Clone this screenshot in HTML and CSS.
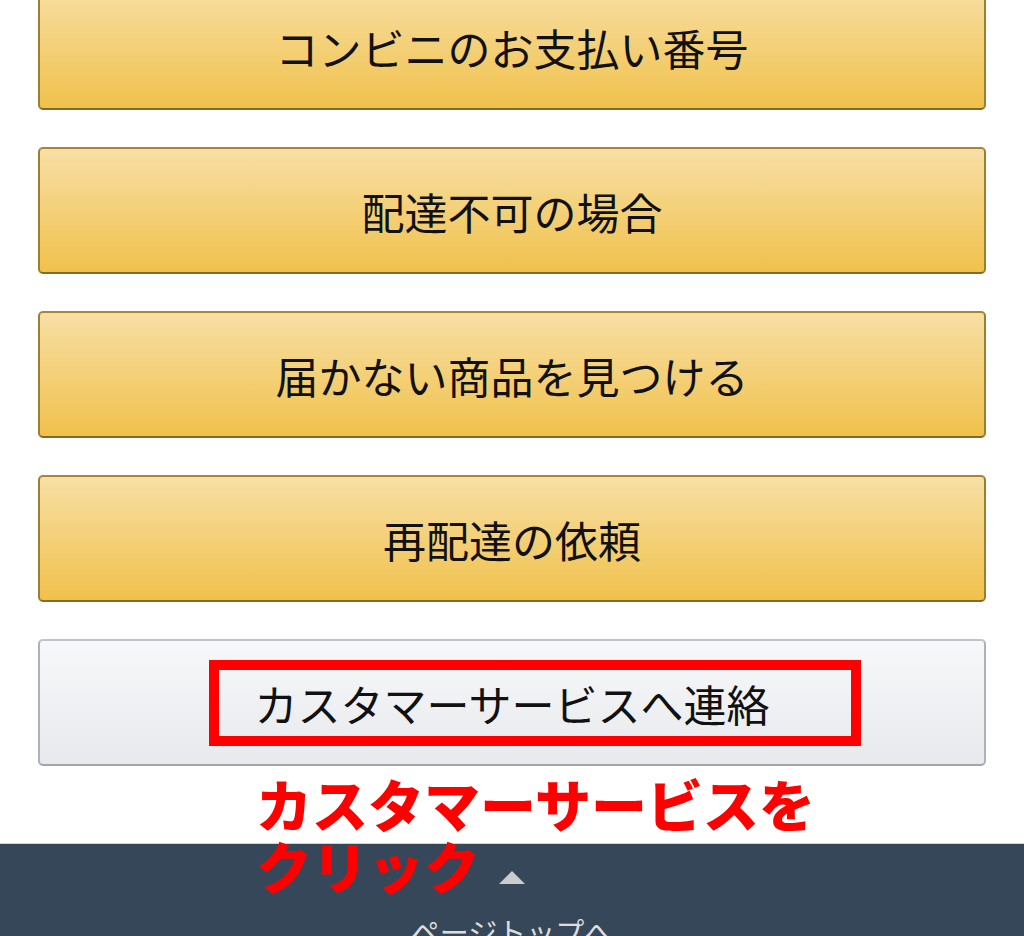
FILE: index.html
```html
<!DOCTYPE html>
<html lang="ja">
<head>
  <meta charset="UTF-8">
  <meta name="viewport" content="width=device-width, initial-scale=1.0">
  <title>注文の管理</title>
  <link rel="stylesheet" href="styles.css">
</head>
<body>
  <div class="actions">
    <a class="btn btn-primary" href="#">コンビニのお支払い番号</a>
    <a class="btn btn-primary" href="#">配達不可の場合</a>
    <a class="btn btn-primary" href="#">届かない商品を見つける</a>
    <a class="btn btn-primary" href="#">再配達の依頼</a>
    <div class="contact">
      <a class="btn btn-secondary" href="#">カスタマーサービスへ連絡</a>
      <!-- 注釈 -->
      <div class="mark-box"></div>
      <p class="mark-text">カスタマーサービスを<br>クリック</p>
    </div>
  </div>

  <footer class="page-footer">
    <a class="to-top" href="#">
      <span class="arrow"></span>
      <span>ページトップへ</span>
    </a>
  </footer>
</body>
</html>
```

FILE: styles.css
```css
body {
  margin: 0;
  padding: 0;
  background-color: #ffffff;
  color: #111111;
  font-family: "Noto Sans CJK JP", "Noto Sans", sans-serif;
  overflow: hidden;
}
.actions {
  display: flex;
  flex-direction: column;
  gap: 37px;
  margin-top: -17px;
  padding: 0 38px;
}
.btn {
  display: flex;
  align-items: center;
  justify-content: center;
  box-sizing: border-box;
  height: 127px;
  border-radius: 5px;
  border: 2px solid;
  font-size: 43px;
  color: #111111;
  text-decoration: none;
}
.btn-primary {
  background: linear-gradient(to bottom, #f7dfa5, #f0c14b);
  border-color: #a88734 #9c7e31 #846a29;
}
.btn-secondary {
  background: linear-gradient(to bottom, #f7f8fa, #e7e9ec);
  border-color: #c0c3c8 #adb1b8 #a2a6ac;
}

/* 注釈 */
.contact {
  position: relative;
}
.mark-box {
  position: absolute;
  left: 171px;
  top: 21px;
  width: 652px;
  height: 86px;
  box-sizing: border-box;
  border: 10px solid #ff0000;
}
.mark-text {
  position: absolute;
  left: 218px;
  top: 133px;
  margin: 0;
  z-index: 2;
  color: #ff0000;
  font-size: 56px;
  font-weight: 900;
  line-height: 62px;
  white-space: nowrap;
}

.page-footer {
  margin-top: 77px;
  height: 120px;
  background-color: #37475a;
  border-top: 1px solid #cfd3d8;
  display: flex;
  justify-content: center;
}
.to-top {
  display: flex;
  flex-direction: column;
  align-items: center;
  padding-top: 27px;
  color: #dddddd;
  text-decoration: none;
  font-size: 29px;
  line-height: 34px;
}
.arrow {
  width: 0;
  height: 0;
  border-left: 13px solid transparent;
  border-right: 13px solid transparent;
  border-bottom: 13px solid #cccccc;
  margin-bottom: 30px;
}
```
